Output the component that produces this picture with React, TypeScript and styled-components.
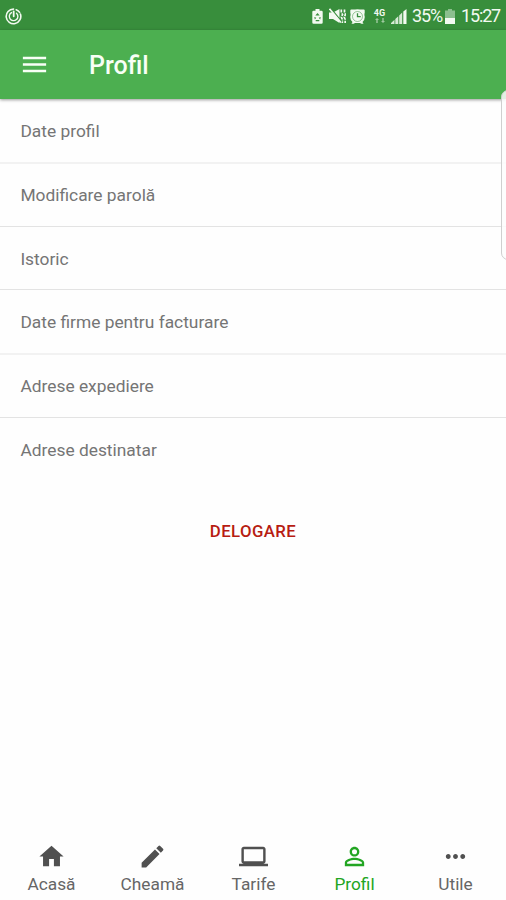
import React from 'react';
import styled, { createGlobalStyle } from 'styled-components';

const GlobalStyle = createGlobalStyle`
  * { box-sizing: border-box; }
  body { margin: 0; background: #fefefe; font-family: Roboto, sans-serif; }
`;

const Screen = styled.div`
  position: relative;
  display: flex;
  flex-direction: column;
  width: 506px;
  height: 900px;
  overflow: hidden;
  background: #fefefe;
`;

const StatusBar = styled.header`
  display: flex;
  align-items: center;
  justify-content: space-between;
  height: 30px;
  padding: 2px 6px 0 5px;
  background: #388e3c;
  color: #f3faf1;
`;

const StatusGroup = styled.div`
  display: flex;
  align-items: center;
`;

const StatusIcon = styled.svg<{ $gap?: number }>`
  display: block;
  flex: none;
  margin-right: ${(p) => p.$gap ?? 0}px;
  fill: currentColor;
`;

const StatusText = styled.span<{ $width: number; $gap?: number }>`
  width: ${(p) => p.$width}px;
  margin-right: ${(p) => p.$gap ?? 0}px;
  font-size: 18px;
  line-height: 28px;
  letter-spacing: -1.15px;
  white-space: nowrap;
`;

const Network = styled.div`
  display: flex;
  flex-direction: column;
  align-items: center;
  width: 13px;
  height: 15px;
  margin-right: 5px;
  font-size: 9px;
  font-weight: 700;
  line-height: 9px;
`;

const AppBar = styled.div`
  display: flex;
  align-items: center;
  flex: none;
  height: 69px;
  padding-left: 19px;
  background: #4caf50;
  color: #f8fff6;
  box-shadow: 0 1px 3px rgba(0, 0, 0, 0.4);
`;

const Title = styled.h1`
  margin: 3px 0 0 39px;
  font-size: 25px;
  font-weight: 500;
  line-height: 32px;
`;

const List = styled.ul`
  margin: 0;
  padding: 0;
  list-style: none;
`;

const Row = styled.li<{ $soft?: boolean }>`
  display: flex;
  align-items: center;
  height: ${(p) => (p.$soft ? 65 : 63)}px;
  padding: ${(p) => (p.$soft ? 1 : 0)}px 20px 0 20.4px;
  border-bottom: ${(p) => (p.$soft ? '2px solid #f2f2f2' : '1px solid #e3e3e3')};
  color: #757575;
  font-size: 17.36px;

  &:nth-child(3), &:last-child { padding-top: 2px; }
  &:last-child { border-bottom-color: transparent; }
`;

const Logout = styled.button`
  align-self: center;
  margin-top: 35px;
  padding: 5px 8px;
  border: 0;
  background: none;
  color: #b71c12;
  font: 500 16.8px/20px Roboto, sans-serif;
  letter-spacing: 0.4px;
`;

const Nav = styled.nav`
  display: grid;
  grid-template-columns: repeat(5, 1fr);
  height: 60px;
  margin-top: auto;
  padding-left: 1px;
`;

const NavItem = styled.a<{ $active?: boolean }>`
  display: flex;
  flex-direction: column;
  align-items: center;
  padding-top: 1.5px;
  color: ${(p) => (p.$active ? '#22a522' : '#666')};
  font-size: 17.3px;
  line-height: 20px;

  svg {
    display: block;
    margin-bottom: 3.5px;
    fill: ${(p) => (p.$active ? '#22a522' : '#505050')};
  }
`;

const EdgeHandle = styled.div`
  position: absolute;
  top: 90px;
  right: -9px;
  width: 14px;
  height: 170px;
  border: 1px solid #cfcfcf;
  border-radius: 7px;
  background: rgba(253, 253, 253, 0.85);
`;

const rows = [
  { label: 'Date profil', soft: true },
  { label: 'Modificare parolă' },
  { label: 'Istoric' },
  { label: 'Date firme pentru facturare', soft: true },
  { label: 'Adrese expediere' },
  { label: 'Adrese destinatar' },
];

const tabs = [
  { label: 'Acasă', path: 'M10 20v-6h4v6h5v-8h3L12 3 2 12h3v8z' },
  {
    label: 'Cheamă',
    path: 'M3 17.25V21h3.75L17.81 9.94l-3.75-3.75L3 17.25zM20.71 7.04a1 1 0 0 0 0-1.41l-2.34-2.34a1 1 0 0 0-1.41 0l-1.83 1.83 3.75 3.75 1.83-1.83z',
  },
  {
    label: 'Tarife',
    path: 'M20 18c1.1 0 2-.9 2-2V6c0-1.1-.9-2-2-2H4c-1.1 0-2 .9-2 2v10c0 1.1.9 2 2 2H0v2h24v-2h-4zM4 6h16v10H4V6z',
  },
  {
    label: 'Profil',
    active: true,
    path: 'M12 5.9a2.1 2.1 0 1 1 0 4.2 2.1 2.1 0 0 1 0-4.2m0 9c2.97 0 6.1 1.46 6.1 2.1v1.1H5.9V17c0-.64 3.13-2.1 6.1-2.1M12 4C9.79 4 8 5.79 8 8s1.79 4 4 4 4-1.79 4-4-1.79-4-4-4zm0 9c-2.67 0-8 1.34-8 4v3h16v-3c0-2.66-5.33-4-8-4z',
  },
  {
    label: 'Utile',
    path: 'M6 10c-1.1 0-2 .9-2 2s.9 2 2 2 2-.9 2-2-.9-2-2-2zm12 0c-1.1 0-2 .9-2 2s.9 2 2 2 2-.9 2-2-.9-2-2-2zm-6 0c-1.1 0-2 .9-2 2s.9 2 2 2 2-.9 2-2-.9-2-2-2z',
  },
];

export default function App() {
  return (
    <Screen>
      <GlobalStyle />
      <StatusBar>
        <StatusIcon width="17" height="17" viewBox="0 0 17 17">
          <g fill="none" stroke="currentColor" strokeLinecap="round">
            <path d="M8.5 1.1A7.3 7.3 0 1 0 15.4 6M11.2 1.7q2.200.8 3.400 2.700" strokeWidth="1.6" />
            <path d="M6.500 4.600a4.300 4.300 0 1 0 5 .6" strokeWidth="1.400" />
            <path d="M8.700 3.500v4.800" strokeWidth="1.800" />
          </g>
        </StatusIcon>
        <StatusGroup>
          <StatusIcon width="11" height="15" viewBox="0 0 11 15" $gap={6}>
            <path
              fillRule="evenodd"
              d="M3.5 0h4v1.7h2q1.2 0 1.2 1.2v10.700q0 1.200-1.200 1.200h-8q-1.200 0-1.200-1.200V2.900q0-1.200 1.200-1.200h2zM5.500 4 3.300 6.500h4.400zM2.300 8l.5 2.500 1.500-1.800zM8.700 8l-.5 2.500-1.500-1.800zM3.700 11v1.200h3.600V11z"
            />
          </StatusIcon>
          <StatusIcon width="17" height="16" viewBox="0 0 17 16" $gap={4}>
            <path d="M0 4.500h4L10.500 1v14L4 11H0z" />
            <path
              fill="none"
              stroke="currentColor"
              strokeWidth="1.7"
              strokeDasharray="3 1"
              d="M12.300 1.500v3l1.300 2-1.300 2.500 1 2.500V15M15.500 1.500v3l1 2-1.300 2.500 1 2.500V15"
            />
            <path d="M1.500 0 13 14" stroke="#388e3c" strokeWidth="1.3" />
            <path d="M.5.8 12 14.500" stroke="currentColor" strokeWidth="1.600" />
          </StatusIcon>
          <StatusIcon width="15" height="15" viewBox="0 0 15 15" $gap={8}>
            <path d="M.3 4V1.500q0-1 1-1H5q2.500-.7 5 0h3.700q1 0 1 1V4q-.6 1 0 3.500Q15 11 12.500 13l1 1.700h-2.200L10 14H5l-1.300.700H1.500l1-1.700Q0 11 .3 7.500.9 5 .3 4z" />
            <circle cx="7.5" cy="7.5" r="5" fill="none" stroke="#388e3c" strokeWidth=".5" />
            <path d="M7.500 4.200v3.500h3.200" fill="none" stroke="#388e3c" strokeWidth="1.300" />
          </StatusIcon>
          <Network>
            4G
            <StatusIcon width="10" height="5" viewBox="0 0 10 5" opacity=".55">
              <path d="M0 2h4L2 0zM1.300 2h1.400v3H1.300zM6 3h4L8 5zM7.300 0h1.400v3H7.300z" />
            </StatusIcon>
          </Network>
          <StatusIcon width="16" height="15" viewBox="0 0 16 15" $gap={5}>
            <path d="M0 15v-1l3.500-3.200V15zM4.300 15v-5l3-2.800V15zM8.200 15V6.400L11.200 3.600V15z" opacity=".85" />
            <path d="M12.300 15V2.500L15.500 0v15z" />
          </StatusIcon>
          <StatusText $width={29} $gap={4}>35%</StatusText>
          <StatusIcon width="10" height="15" viewBox="0 0 10 15" $gap={6}>
            <path d="M3 0h4v1.500h3V9H0V1.500h3z" opacity=".45" />
            <path d="M0 9h10v6H0z" />
          </StatusIcon>
          <StatusText $width={39}>15:27</StatusText>
        </StatusGroup>
      </StatusBar>
      <AppBar>
        <svg width="31" height="31" viewBox="0 0 24 24" fill="currentColor">
          <path d="M3 18h18v-2H3v2zm0-5h18v-2H3v2zm0-7v2h18V6H3z" />
        </svg>
        <Title>Profil</Title>
      </AppBar>
      <List>
        {rows.map((row) => (
          <Row key={row.label} $soft={row.soft}>{row.label}</Row>
        ))}
      </List>
      <Logout>DELOGARE</Logout>
      <Nav>
        {tabs.map((tab) => (
          <NavItem key={tab.label} $active={tab.active}>
            <svg width="29" height="29" viewBox="0 0 24 24">
              <path fillRule="evenodd" d={tab.path} />
            </svg>
            {tab.label}
          </NavItem>
        ))}
      </Nav>
      <EdgeHandle />
    </Screen>
  );
}
